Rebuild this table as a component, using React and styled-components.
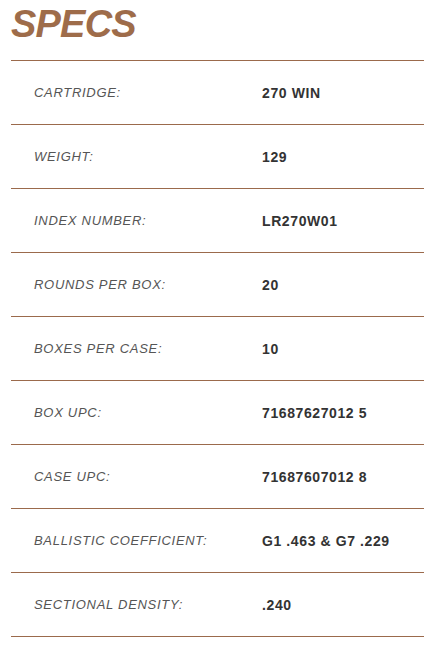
import React from "react";
import styled, { createGlobalStyle } from "styled-components";

const Global = createGlobalStyle`
  html, body { margin: 0; padding: 0; background: #ffffff; }
  body { font-family: "Liberation Sans", Arial, sans-serif; }
`;

const Page = styled.div`
  width: 424px;
  padding-left: 11px;
  box-sizing: border-box;
`;

const Title = styled.h2`
  margin: 0;
  padding: 5px 0 17px;
  font-family: "Liberation Sans", Arial, sans-serif;
  font-size: 38px;
  line-height: 38px;
  font-weight: 700;
  font-style: italic;
  letter-spacing: -0.8px;
  color: #9e6c4a;
`;

const List = styled.div`
  border-top: 1px solid #9b6a4c;
`;

const Row = styled.div`
  display: grid;
  grid-template-columns: 228px 1fr;
  align-items: center;
  height: 63px;
  padding-left: 23px;
  border-bottom: 1px solid #9b6a4c;
`;

const Label = styled.span`
  font-size: 13px;
  font-style: italic;
  font-weight: 400;
  letter-spacing: 0.7px;
  color: #555555;
`;

const Value = styled.span`
  font-size: 14px;
  font-weight: 700;
  letter-spacing: 0.6px;
  color: #333333;
`;

const specs = [
  ["CARTRIDGE:", "270 WIN"],
  ["WEIGHT:", "129"],
  ["INDEX NUMBER:", "LR270W01"],
  ["ROUNDS PER BOX:", "20"],
  ["BOXES PER CASE:", "10"],
  ["BOX UPC:", "71687627012 5"],
  ["CASE UPC:", "71687607012 8"],
  ["BALLISTIC COEFFICIENT:", "G1 .463 & G7 .229"],
  ["SECTIONAL DENSITY:", ".240"],
];

export default function App() {
  return (
    <Page>
      <Global />
      <Title>SPECS</Title>
      <List>
        {specs.map(([label, value]) => (
          <Row key={label}>
            <Label>{label}</Label>
            <Value>{value}</Value>
          </Row>
        ))}
      </List>
    </Page>
  );
}
